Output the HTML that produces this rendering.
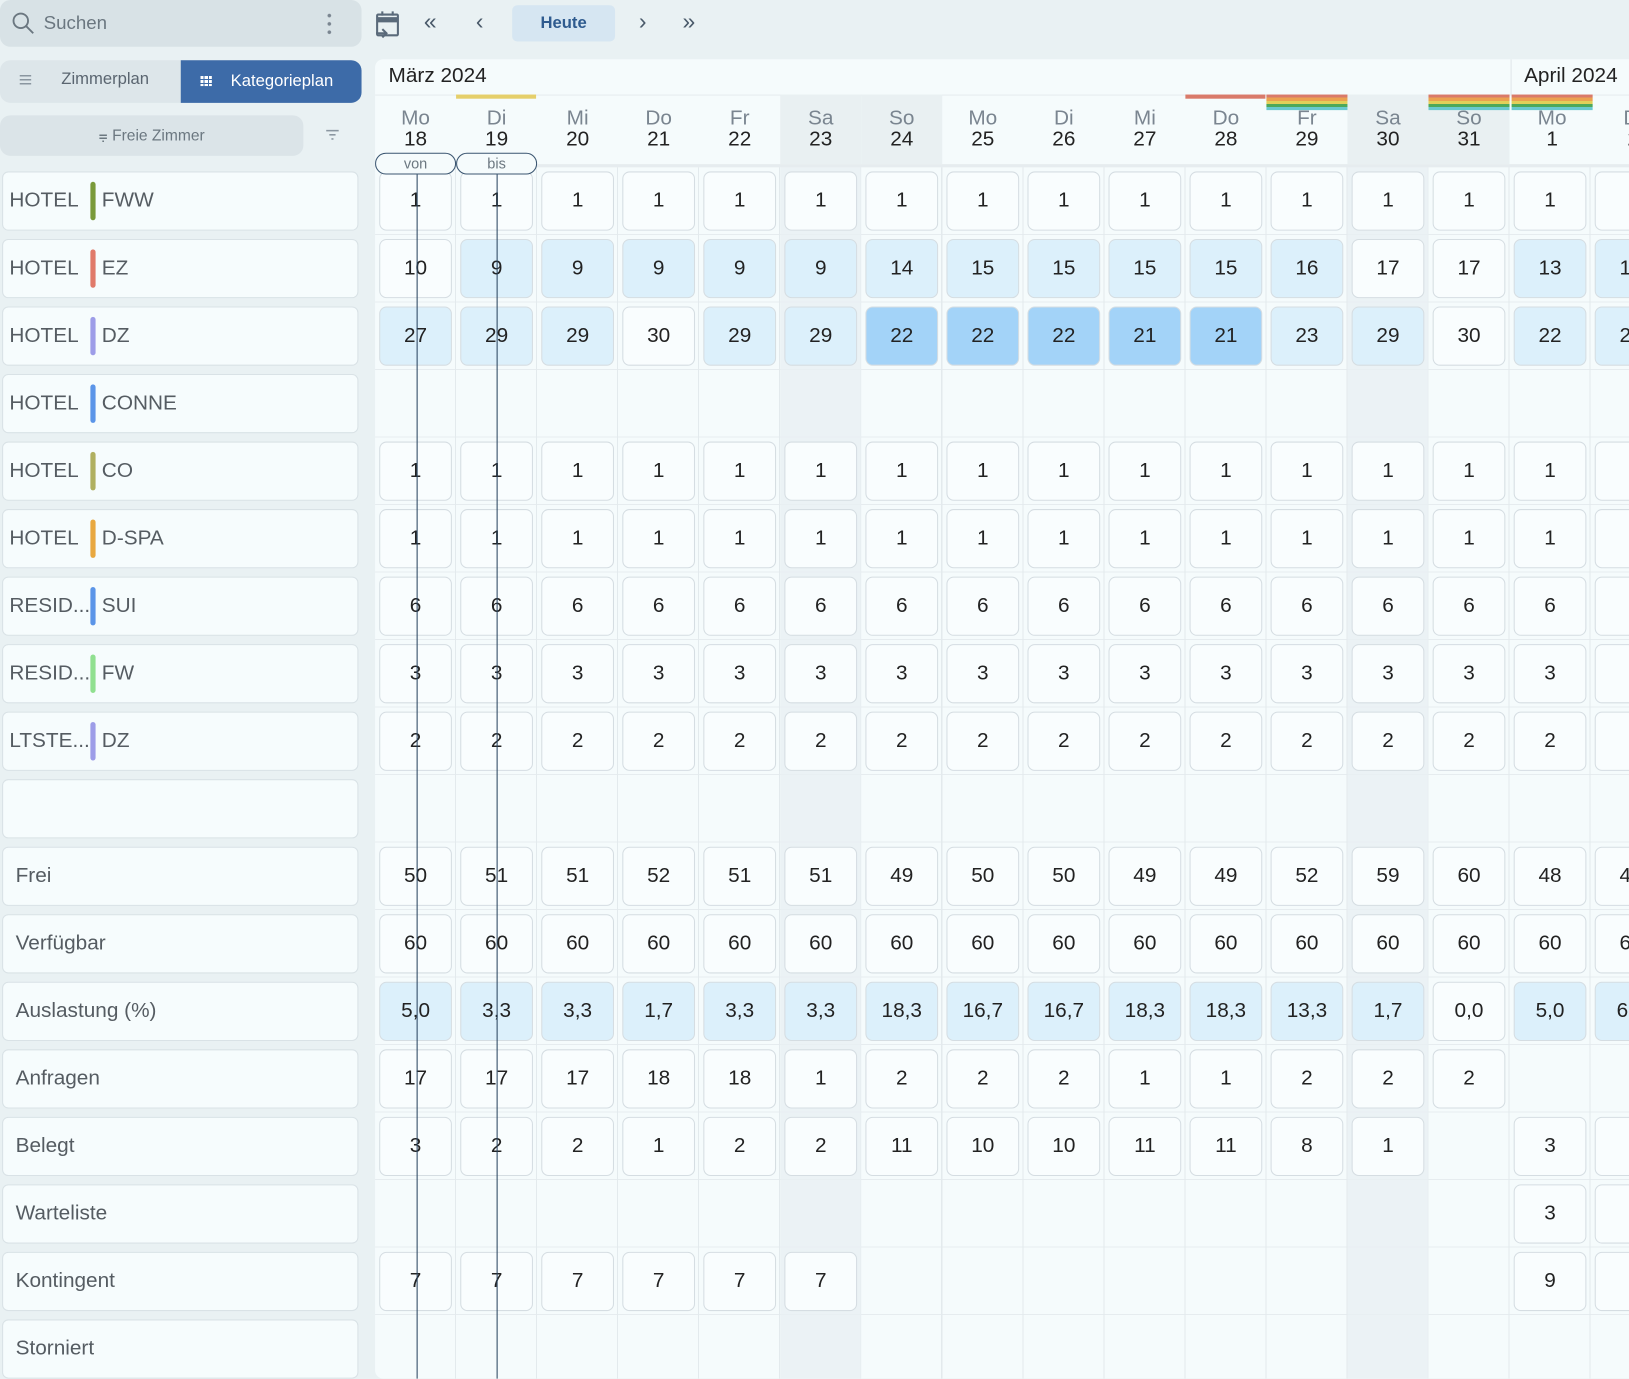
<!DOCTYPE html>
<html><head><meta charset="utf-8"><style>
*{box-sizing:border-box;margin:0;padding:0}
html,body{width:1629px;height:1379px;overflow:hidden;background:#e9f1f3;font-family:"Liberation Sans","DejaVu Sans",sans-serif}
#w{position:absolute;left:0;top:0;width:1568px;height:1327px;transform:scale(1.0389);transform-origin:0 0}
.abs{position:absolute}
#search{left:0;top:0;width:348px;height:45px;border-radius:10px;background:#d8e2e6}
#toggle{left:0;top:58px;width:348px;height:41px;border-radius:10px;background:#dde6ea}
#kat{left:174px;top:58px;width:174px;height:41px;border-radius:0 10px 10px 0;background:#3d6ba8;color:#fff;font-size:16px;line-height:41px}
#freie{left:0;top:111px;width:292px;height:39px;border-radius:10px;background:#dbe4e8;color:#6b7780;font-size:15px;line-height:39px;text-align:center}
#panel{left:361px;top:57px;width:1207px;height:1270px;background:#f5fbfc;border-radius:8px 0 0 8px;overflow:hidden}
.lb{position:absolute;left:2px;width:343px;height:57px;background:#f6fcfd;border:1px solid #d9e2e6;border-radius:6px;font-size:20px;color:#555c62;line-height:55px}
.lb b{font-weight:normal;position:absolute;left:6px}
.lb s{position:absolute;left:84px;top:9px;width:5px;height:37px;border-radius:3px;text-decoration:none}
.lb u{text-decoration:none;position:absolute;left:95px}
.lb em{font-style:normal;position:absolute;left:12px}
.r{position:absolute;left:0;height:57px;display:flex;width:1300px}
.r i{flex:0 0 70px;margin:0 4px;height:57px;border:1px solid #d5dde2;border-radius:7px;background:#f9fdfe;font-style:normal;text-align:center;line-height:55px;font-size:20px;color:#222}
.r i.l{background:#dcf0fb}
.r i.m{background:#a3d3f8}
.r i.e{border:none;background:transparent}
.hd{position:absolute;top:34px;width:78px;height:67px;text-align:center;font-size:20px;line-height:20px}
.hd span{display:block;color:#7a8590;margin-top:13px}
.hd b{display:block;font-weight:normal;color:#222}
.we{background:#e9f0f2}
.bar{position:absolute;height:4px}
.rb{position:absolute;top:34px;width:78px;height:15px;background:linear-gradient(#d97a6a 0 3px,#eba150 3px 6px,#e2cf5a 6px 9px,#4ea85a 9px 12px,#6ac8d0 12px 15px)}
.pill{position:absolute;top:90px;height:21px;width:78px;border:1px solid #3a5570;border-radius:11px;background:#f5fbfc;font-size:14px;color:#6b7780;text-align:center;line-height:19px}
.vl{position:absolute;top:111px;width:1px;height:1200px;background:#2a4560}
.ic{color:#4a5a6a;font-size:22px;top:8px}
</style></head><body><div id="w">
<div id="search" class="abs"></div>
<svg class="abs" style="left:11px;top:11px" width="24" height="24" viewBox="0 0 24 24" fill="none" stroke="#6b7780" stroke-width="1.8"><circle cx="9" cy="9" r="7"/><path d="M14 14l7 7"/></svg>
<div class="abs" style="left:42px;top:12px;font-size:18px;color:#6b7780">Suchen</div>
<div class="abs" style="left:315px;top:11px;width:4px;height:24px;background:radial-gradient(circle,#7a8590 1.5px,transparent 2px) 0 0/4px 8px"></div>
<svg class="abs" style="left:361px;top:10px" width="24" height="28" viewBox="0 0 24 28" fill="none" stroke="#5a6a7a" stroke-width="2"><rect x="2" y="4" width="20" height="20" rx="1" fill="#5a6a7a" fill-opacity="0"/><path d="M2 9h20" stroke-width="5"/><path d="M7 1v4M17 1v4"/><path d="M1 22h9M7 18l4 4-4 4"/></svg>
<div class="abs ic" style="left:408px">«</div>
<div class="abs ic" style="left:458px">‹</div>
<div class="abs" style="left:493px;top:5px;width:99px;height:35px;border-radius:5px;background:#d6e6f2;color:#2f5b8f;font-weight:bold;font-size:16px;line-height:35px;text-align:center">Heute</div>
<div class="abs ic" style="left:615px">›</div>
<div class="abs ic" style="left:657px">»</div>
<div id="toggle" class="abs"></div>
<div class="abs" style="left:19px;top:72px;width:11px;height:10px;background:repeating-linear-gradient(#8a96a0 0 1.5px,transparent 1.5px 4px)"></div>
<div class="abs" style="left:59px;top:68px;font-size:16px;color:#5a6570">Zimmerplan</div>
<div id="kat" class="abs"><span style="display:inline-block;width:11px;height:10px;margin:0 18px 0 19px;background:repeating-linear-gradient(90deg,#fff 0 3px,transparent 3px 4px);-webkit-mask:repeating-linear-gradient(#000 0 3px,transparent 3px 4px)"></span>Kategorieplan</div>
<div id="freie" class="abs">⩦ Freie Zimmer</div>
<div class="abs" style="left:314px;top:125px;width:12px;height:10px;background:linear-gradient(#8a96a0,#8a96a0) 0 0/12px 1.5px no-repeat,linear-gradient(#8a96a0,#8a96a0) 3px 4px/6px 1.5px no-repeat,linear-gradient(#8a96a0,#8a96a0) 5px 8px/2px 1.5px no-repeat"></div>

<div class="lb" style="top:165px"><b>HOTEL</b><s style="background:#7a9a3a"></s><u>FWW</u></div>
<div class="lb" style="top:230px"><b>HOTEL</b><s style="background:#e07a6a"></s><u>EZ</u></div>
<div class="lb" style="top:295px"><b>HOTEL</b><s style="background:#9d9de8"></s><u>DZ</u></div>
<div class="lb" style="top:360px"><b>HOTEL</b><s style="background:#5b95e8"></s><u>CONNE</u></div>
<div class="lb" style="top:425px"><b>HOTEL</b><s style="background:#b0b060"></s><u>CO</u></div>
<div class="lb" style="top:490px"><b>HOTEL</b><s style="background:#e8a840"></s><u>D-SPA</u></div>
<div class="lb" style="top:555px"><b>RESID...</b><s style="background:#5b95e8"></s><u>SUI</u></div>
<div class="lb" style="top:620px"><b>RESID...</b><s style="background:#90e090"></s><u>FW</u></div>
<div class="lb" style="top:685px"><b>LTSTE...</b><s style="background:#9d9de8"></s><u>DZ</u></div>
<div class="lb" style="top:750px"></div>
<div class="lb" style="top:815px"><em>Frei</em></div>
<div class="lb" style="top:880px"><em>Verfügbar</em></div>
<div class="lb" style="top:945px"><em>Auslastung (%)</em></div>
<div class="lb" style="top:1010px"><em>Anfragen</em></div>
<div class="lb" style="top:1075px"><em>Belegt</em></div>
<div class="lb" style="top:1140px"><em>Warteliste</em></div>
<div class="lb" style="top:1205px"><em>Kontingent</em></div>
<div class="lb" style="top:1270px"><em>Storniert</em></div>

<div id="panel" class="abs">
<div class="abs" style="left:0;top:104px;width:1300px;height:1200px;background:repeating-linear-gradient(90deg,transparent 0 77px,#e3eaed 77px 78px),repeating-linear-gradient(transparent 0 64px,#e6ecef 64px 65px);background-position:0 0,0 0"></div>
<div class="abs we" style="left:390px;top:104px;width:78px;height:1200px;opacity:.8"></div>
<div class="abs we" style="left:936px;top:104px;width:78px;height:1200px;opacity:.8"></div>
<div class="abs" style="left:13px;top:5px;font-size:20px;color:#222">März 2024</div>
<div class="abs" style="left:1093px;top:0;width:1px;height:34px;background:#e0e7ea"></div>
<div class="abs" style="left:1106px;top:5px;font-size:20px;color:#222">April 2024</div>
<div class="abs" style="left:0;top:34px;width:1300px;height:1px;background:#e6ecef"></div>
<div class="hd" style="left:0"><span>Mo</span><b>18</b></div>
<div class="hd" style="left:78px"><span>Di</span><b>19</b></div>
<div class="hd" style="left:156px"><span>Mi</span><b>20</b></div>
<div class="hd" style="left:234px"><span>Do</span><b>21</b></div>
<div class="hd" style="left:312px"><span>Fr</span><b>22</b></div>
<div class="hd we" style="left:390px"><span>Sa</span><b>23</b></div>
<div class="hd we" style="left:468px"><span>So</span><b>24</b></div>
<div class="hd" style="left:546px"><span>Mo</span><b>25</b></div>
<div class="hd" style="left:624px"><span>Di</span><b>26</b></div>
<div class="hd" style="left:702px"><span>Mi</span><b>27</b></div>
<div class="hd" style="left:780px"><span>Do</span><b>28</b></div>
<div class="hd" style="left:858px"><span>Fr</span><b>29</b></div>
<div class="hd we" style="left:936px"><span>Sa</span><b>30</b></div>
<div class="hd we" style="left:1014px"><span>So</span><b>31</b></div>
<div class="hd" style="left:1094px"><span>Mo</span><b>1</b></div>
<div class="hd" style="left:1172px"><span>Di</span><b>2</b></div>
<div class="bar" style="left:78px;top:34px;width:77px;background:#e5cf6a"></div>
<div class="bar" style="left:780px;top:34px;width:77px;background:#d97a6a"></div>
<div class="rb" style="left:858px"></div>
<div class="rb" style="left:1014px"></div>
<div class="rb" style="left:1094px"></div>
<div class="abs" style="left:0;top:101px;width:1300px;height:3px;background:#e6ecef"></div>

<div class="r" style="top:108px"><i>1</i><i>1</i><i>1</i><i>1</i><i>1</i><i>1</i><i>1</i><i>1</i><i>1</i><i>1</i><i>1</i><i>1</i><i>1</i><i>1</i><i>1</i><i></i></div>
<div class="r" style="top:173px"><i>10</i><i class="l">9</i><i class="l">9</i><i class="l">9</i><i class="l">9</i><i class="l">9</i><i class="l">14</i><i class="l">15</i><i class="l">15</i><i class="l">15</i><i class="l">15</i><i class="l">16</i><i>17</i><i>17</i><i class="l">13</i><i class="l">13</i></div>
<div class="r" style="top:238px"><i class="l">27</i><i class="l">29</i><i class="l">29</i><i>30</i><i class="l">29</i><i class="l">29</i><i class="m">22</i><i class="m">22</i><i class="m">22</i><i class="m">21</i><i class="m">21</i><i class="l">23</i><i class="l">29</i><i>30</i><i class="l">22</i><i class="l">22</i></div>
<div class="r" style="top:368px"><i>1</i><i>1</i><i>1</i><i>1</i><i>1</i><i>1</i><i>1</i><i>1</i><i>1</i><i>1</i><i>1</i><i>1</i><i>1</i><i>1</i><i>1</i><i></i></div>
<div class="r" style="top:433px"><i>1</i><i>1</i><i>1</i><i>1</i><i>1</i><i>1</i><i>1</i><i>1</i><i>1</i><i>1</i><i>1</i><i>1</i><i>1</i><i>1</i><i>1</i><i></i></div>
<div class="r" style="top:498px"><i>6</i><i>6</i><i>6</i><i>6</i><i>6</i><i>6</i><i>6</i><i>6</i><i>6</i><i>6</i><i>6</i><i>6</i><i>6</i><i>6</i><i>6</i><i></i></div>
<div class="r" style="top:563px"><i>3</i><i>3</i><i>3</i><i>3</i><i>3</i><i>3</i><i>3</i><i>3</i><i>3</i><i>3</i><i>3</i><i>3</i><i>3</i><i>3</i><i>3</i><i></i></div>
<div class="r" style="top:628px"><i>2</i><i>2</i><i>2</i><i>2</i><i>2</i><i>2</i><i>2</i><i>2</i><i>2</i><i>2</i><i>2</i><i>2</i><i>2</i><i>2</i><i>2</i><i></i></div>
<div class="r" style="top:758px"><i>50</i><i>51</i><i>51</i><i>52</i><i>51</i><i>51</i><i>49</i><i>50</i><i>50</i><i>49</i><i>49</i><i>52</i><i>59</i><i>60</i><i>48</i><i>48</i></div>
<div class="r" style="top:823px"><i>60</i><i>60</i><i>60</i><i>60</i><i>60</i><i>60</i><i>60</i><i>60</i><i>60</i><i>60</i><i>60</i><i>60</i><i>60</i><i>60</i><i>60</i><i>60</i></div>
<div class="r" style="top:888px"><i class="l">5,0</i><i class="l">3,3</i><i class="l">3,3</i><i class="l">1,7</i><i class="l">3,3</i><i class="l">3,3</i><i class="l">18,3</i><i class="l">16,7</i><i class="l">16,7</i><i class="l">18,3</i><i class="l">18,3</i><i class="l">13,3</i><i class="l">1,7</i><i>0,0</i><i class="l">5,0</i><i class="l">6,7</i></div>
<div class="r" style="top:953px"><i>17</i><i>17</i><i>17</i><i>18</i><i>18</i><i>1</i><i>2</i><i>2</i><i>2</i><i>1</i><i>1</i><i>2</i><i>2</i><i>2</i><i class="e"></i><i class="e"></i></div>
<div class="r" style="top:1018px"><i>3</i><i>2</i><i>2</i><i>1</i><i>2</i><i>2</i><i>11</i><i>10</i><i>10</i><i>11</i><i>11</i><i>8</i><i>1</i><i class="e"></i><i>3</i><i></i></div>
<div class="r" style="top:1083px"><i class="e"></i><i class="e"></i><i class="e"></i><i class="e"></i><i class="e"></i><i class="e"></i><i class="e"></i><i class="e"></i><i class="e"></i><i class="e"></i><i class="e"></i><i class="e"></i><i class="e"></i><i class="e"></i><i>3</i><i></i></div>
<div class="r" style="top:1148px"><i>7</i><i>7</i><i>7</i><i>7</i><i>7</i><i>7</i><i class="e"></i><i class="e"></i><i class="e"></i><i class="e"></i><i class="e"></i><i class="e"></i><i class="e"></i><i class="e"></i><i>9</i><i></i></div>

<div class="vl" style="left:40px"></div>
<div class="vl" style="left:117px"></div>
<div class="pill" style="left:0">von</div>
<div class="pill" style="left:78px">bis</div>
</div>
</div></body></html>
